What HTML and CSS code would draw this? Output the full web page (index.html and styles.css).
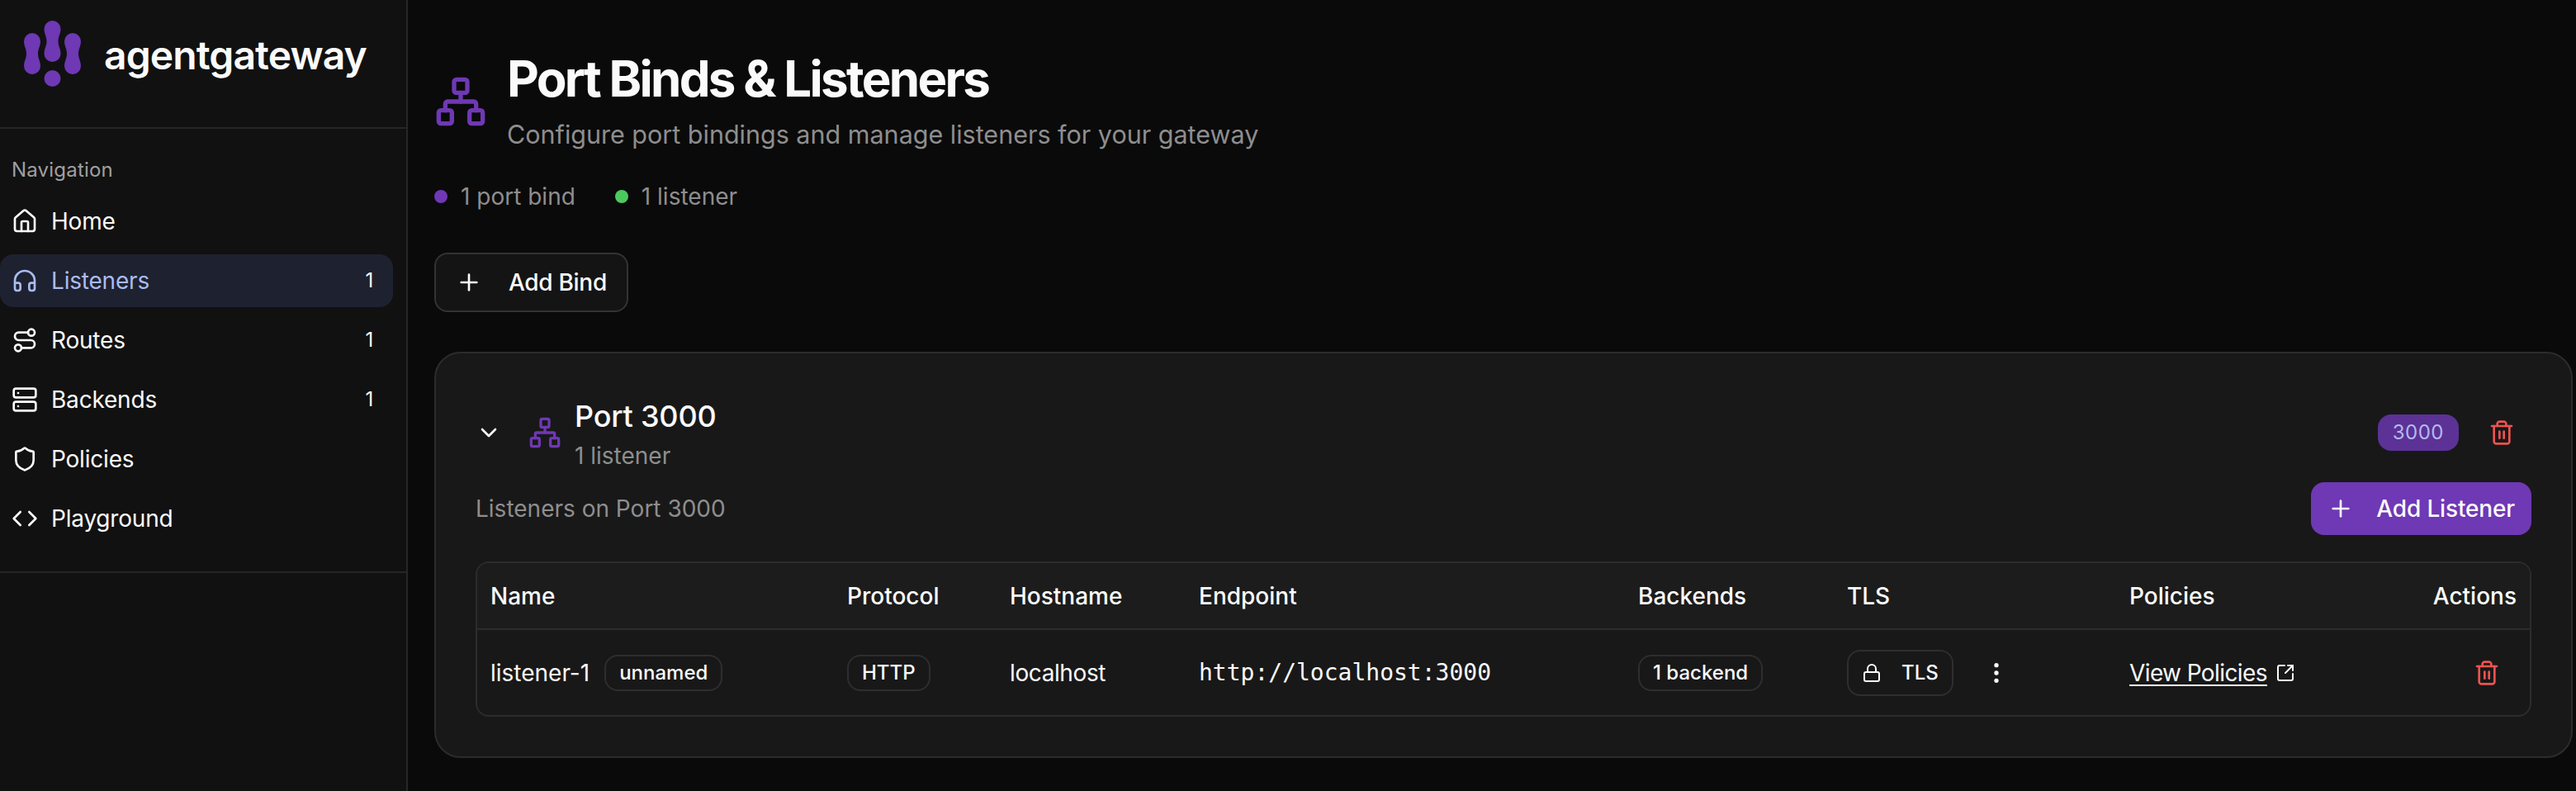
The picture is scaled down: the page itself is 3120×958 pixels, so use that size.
FILE: index.html
```html
<!DOCTYPE html>
<html lang="en">
<head>
  <meta charset="UTF-8">
  <title>agentgateway - Port Binds &amp; Listeners</title>
  <link rel="stylesheet" href="styles.css">
</head>
<body>
  <div class="app">
    <!-- Sidebar -->
    <aside class="sidebar">
      <div class="brand">
        <svg class="brand-logo" viewBox="0 0 80 80" fill="#6f38b4">
          <path d="M5 25a10 10 0 0 1 20 0c0 6-3 9-3 15s3 9 3 15a10 10 0 0 1-20 0c0-6 3-9 3-15s-3-9-3-15z"/>
          <path d="M29.500 10a10 10 0 0 1 20 0c0 6-3 9-3 15s3 9 3 15a10 10 0 0 1-20 0c0-6 3-9 3-15s-3-9-3-15z"/>
          <path d="M54 25a10 10 0 0 1 20 0c0 6-3 9-3 15s3 9 3 15a10 10 0 0 1-20 0c0-6 3-9 3-15s-3-9-3-15z"/>
          <circle cx="39.500" cy="70" r="10"/>
        </svg>
        <span class="brand-name">agentgateway</span>
      </div>
      <nav class="nav">
        <div class="nav-label">Navigation</div>
        <a class="nav-item">
          <svg class="icon" viewBox="0 0 24 24"><path d="M15 21v-8a1 1 0 0 0-1-1h-4a1 1 0 0 0-1 1v8"/><path d="M3 10a2 2 0 0 1 .709-1.528l7-5.999a2 2 0 0 1 2.582 0l7 5.999A2 2 0 0 1 21 10v9a2 2 0 0 1-2 2H5a2 2 0 0 1-2-2z"/></svg>
          <span>Home</span>
        </a>
        <a class="nav-item active">
          <svg class="icon" viewBox="0 0 24 24"><path d="M3 14h3a2 2 0 0 1 2 2v3a2 2 0 0 1-2 2H5a2 2 0 0 1-2-2v-7a9 9 0 0 1 18 0v7a2 2 0 0 1-2 2h-1a2 2 0 0 1-2-2v-3a2 2 0 0 1 2-2h3"/></svg>
          <span>Listeners</span>
          <span class="nav-count">1</span>
        </a>
        <a class="nav-item">
          <svg class="icon" viewBox="0 0 24 24"><circle cx="6" cy="19" r="3"/><path d="M9 19h8.500a3.500 3.500 0 0 0 0-7h-11a3.500 3.500 0 0 1 0-7H15"/><circle cx="18" cy="5" r="3"/></svg>
          <span>Routes</span>
          <span class="nav-count">1</span>
        </a>
        <a class="nav-item">
          <svg class="icon" viewBox="0 0 24 24"><rect width="20" height="8" x="2" y="2" rx="2" ry="2"/><rect width="20" height="8" x="2" y="14" rx="2" ry="2"/><line x1="6" x2="6.010" y1="6" y2="6"/><line x1="6" x2="6.010" y1="18" y2="18"/></svg>
          <span>Backends</span>
          <span class="nav-count">1</span>
        </a>
        <a class="nav-item">
          <svg class="icon" viewBox="0 0 24 24"><path d="M20 13c0 5-3.500 7.500-7.660 8.950a1 1 0 0 1-.67-.01C7.500 20.500 4 18 4 13V6a1 1 0 0 1 1-1c2 0 4.500-1.200 6.240-2.720a1.170 1.170 0 0 1 1.520 0C14.510 3.810 17 5 19 5a1 1 0 0 1 1 1z"/></svg>
          <span>Policies</span>
        </a>
        <a class="nav-item">
          <svg class="icon" viewBox="0 0 24 24"><polyline points="16 18 22 12 16 6"/><polyline points="8 6 2 12 8 18"/></svg>
          <span>Playground</span>
        </a>
      </nav>
    </aside>

    <!-- Main content -->
    <main class="main">
      <header class="page-head">
        <svg class="icon icon-page" viewBox="0 0 24 24"><rect x="16" y="16" width="6" height="6" rx="1"/><rect x="2" y="16" width="6" height="6" rx="1"/><rect x="9" y="2" width="6" height="6" rx="1"/><path d="M5 16v-3a1 1 0 0 1 1-1h12a1 1 0 0 1 1 1v3"/><path d="M12 12V8"/></svg>
        <div>
          <h1>Port Binds &amp; Listeners</h1>
          <p class="page-sub">Configure port bindings and manage listeners for your gateway</p>
        </div>
      </header>

      <div class="stats">
        <div class="stat"><span class="dot dot-purple"></span>1 port bind</div>
        <div class="stat"><span class="dot dot-green"></span>1 listener</div>
      </div>

      <button class="btn btn-outline">
        <svg class="icon icon-plus" viewBox="0 0 24 24"><path d="M5 12h14"/><path d="M12 5v14"/></svg>
        Add Bind
      </button>

      <section class="card">
        <div class="card-head">
          <svg class="icon chevron" viewBox="0 0 24 24"><path d="m6 9 6 6 6-6"/></svg>
          <svg class="icon icon-port" viewBox="0 0 24 24"><rect x="16" y="16" width="6" height="6" rx="1"/><rect x="2" y="16" width="6" height="6" rx="1"/><rect x="9" y="2" width="6" height="6" rx="1"/><path d="M5 16v-3a1 1 0 0 1 1-1h12a1 1 0 0 1 1 1v3"/><path d="M12 12V8"/></svg>
          <div class="card-title">
            <h2>Port 3000</h2>
            <div class="muted">1 listener</div>
          </div>
          <div class="card-actions">
            <span class="port-badge">3000</span>
            <button class="icon-btn">
              <svg class="icon icon-danger" viewBox="0 0 24 24"><path d="M3 6h18"/><path d="M19 6v14c0 1-1 2-2 2H7c-1 0-2-1-2-2V6"/><path d="M8 6V4c0-1 1-2 2-2h4c1 0 2 1 2 2v2"/><line x1="10" x2="10" y1="11" y2="17"/><line x1="14" x2="14" y1="11" y2="17"/></svg>
            </button>
          </div>
        </div>

        <div class="listeners-head">
          <div class="muted">Listeners on Port 3000</div>
          <button class="btn btn-primary">
            <svg class="icon icon-plus" viewBox="0 0 24 24"><path d="M5 12h14"/><path d="M12 5v14"/></svg>
            Add Listener
          </button>
        </div>

        <div class="table-wrap">
          <table>
            <colgroup>
              <col class="col-name"><col class="col-protocol"><col class="col-host"><col class="col-endpoint"><col class="col-backends"><col class="col-tls"><col class="col-policies"><col>
            </colgroup>
            <thead>
              <tr>
                <th>Name</th>
                <th>Protocol</th>
                <th>Hostname</th>
                <th>Endpoint</th>
                <th>Backends</th>
                <th>TLS</th>
                <th>Policies</th>
                <th class="right">Actions</th>
              </tr>
            </thead>
            <tbody>
              <tr>
                <td><div class="cell-flex">listener-1 <span class="badge">unnamed</span></div></td>
                <td><span class="badge">HTTP</span></td>
                <td class="tight">localhost</td>
                <td class="mono">http://localhost:3000</td>
                <td><span class="badge">1 backend</span></td>
                <td>
                  <div class="tls-cell">
                    <button class="tls-btn">
                      <svg class="icon icon-small" viewBox="0 0 24 24"><rect width="18" height="11" x="3" y="11" rx="2" ry="2"/><path d="M7 11V7a5 5 0 0 1 10 0v4"/></svg>
                      TLS
                    </button>
                    <svg class="icon more" viewBox="0 0 24 24"><circle cx="12" cy="12" r="1"/><circle cx="12" cy="5" r="1"/><circle cx="12" cy="19" r="1"/></svg>
                  </div>
                </td>
                <td>
                  <div class="cell-flex policies">
                    <a class="link">View Policies</a>
                    <svg class="icon icon-small" viewBox="0 0 24 24"><path d="M21 13v6a2 2 0 0 1-2 2H5a2 2 0 0 1-2-2V5a2 2 0 0 1 2-2h6"/><path d="m21 3-9 9"/><path d="M15 3h6v6"/></svg>
                  </div>
                </td>
                <td class="right">
                  <button class="icon-btn">
                    <svg class="icon icon-danger" viewBox="0 0 24 24"><path d="M3 6h18"/><path d="M19 6v14c0 1-1 2-2 2H7c-1 0-2-1-2-2V6"/><path d="M8 6V4c0-1 1-2 2-2h4c1 0 2 1 2 2v2"/><line x1="10" x2="10" y1="11" y2="17"/><line x1="14" x2="14" y1="11" y2="17"/></svg>
                  </button>
                </td>
              </tr>
            </tbody>
          </table>
        </div>
      </section>
    </main>
  </div>
</body>
</html>
```
FILE: styles.css
```css
/* General */
* { box-sizing: border-box; }
html, body { height: 100%; }
body {
  margin: 0;
  overflow: hidden;
  font-family: 'Inter', sans-serif;
  font-size: 28px;
  line-height: 40px;
  background-color: #0a0a0a;
  color: #fafafa;
}
.app {
  display: flex;
  height: 100%;
}
button {
  font-family: inherit;
  color: inherit;
  padding: 0;
  border: none;
  background: none;
}
.icon {
  flex: none;
  width: 32px;
  height: 32px;
  fill: none;
  stroke: currentColor;
  stroke-width: 2;
  stroke-linecap: round;
  stroke-linejoin: round;
}
.muted { color: #8e8e8e; }

/* Sidebar */
.sidebar {
  flex: none;
  width: 494px;
  background-color: #111;
  border-right: 2px solid #262626;
}
.brand {
  display: flex;
  align-items: center;
  gap: 22px;
  height: 156px;
  padding: 0 24px 24px;
  border-bottom: 2px solid #262626;
}
.brand-logo {
  width: 80px;
  height: 80px;
}
.brand-name {
  margin-top: 4px;
  font-size: 48px;
  font-weight: 600;
  line-height: 56px;
  letter-spacing: -0.900px;
}
.nav {
  height: 538px;
  padding: 32px 16px 32px 0;
  border-bottom: 2px solid #262626;
}
.nav-label {
  height: 48px;
  padding: 2px 0 0 14px;
  font-size: 24px;
  line-height: 32px;
  letter-spacing: 0.200px;
  color: #a0a0a0;
}
.nav-item {
  display: flex;
  align-items: center;
  gap: 16px;
  height: 64px;
  margin-bottom: 8px;
  padding: 0 24px 0 14px;
  border-radius: 16px;
  letter-spacing: -0.200px;
}
.nav-item.active {
  background-color: #1e2130;
  color: #a9bcf0;
}
.nav-count {
  margin-left: auto;
  font-size: 24px;
  color: #fafafa;
}

/* Page header */
.main {
  flex: 1;
  min-width: 0;
  padding: 59px 4px 0 32px;
}
.page-head {
  display: flex;
  align-items: center;
  gap: 24px;
}
.icon-page {
  width: 64px;
  height: 64px;
  color: #6f38b4;
}
h1 {
  margin: 0 0 8px;
  font-size: 60px;
  font-weight: 700;
  line-height: 72px;
  letter-spacing: -2.700px;
}
.page-sub {
  margin: 0;
  font-size: 30.500px;
  line-height: 48px;
  color: #8e8e8e;
}
.stats {
  display: flex;
  gap: 48px;
  margin: 31px 0 48px;
  color: #8e8e8e;
}
.stat {
  display: flex;
  align-items: center;
  gap: 16px;
}
.dot {
  width: 16px;
  height: 16px;
  border-radius: 50%;
}
.dot-purple { background-color: #6f38b4; }
.dot-green { background-color: #4cc95e; }

/* Buttons */
.btn {
  display: flex;
  align-items: center;
  border-radius: 16px;
  font-size: 28px;
  font-weight: 500;
}
.btn-outline {
  gap: 32px;
  height: 72px;
  padding: 0 24px;
  background-color: #141414;
  border: 2px solid #333;
  letter-spacing: -0.300px;
}
.btn-primary {
  gap: 27px;
  height: 64px;
  padding: 0 20px;
  background-color: #6f38b4;
  letter-spacing: -0.150px;
}
.icon-btn {
  display: flex;
  align-items: center;
  justify-content: center;
  width: 72px;
  height: 72px;
}
.icon-danger { color: #ef5350; }

/* Port card */
.card {
  margin-top: 48px;
  padding: 48px;
  background-color: #181818;
  border: 2px solid #2c2c2c;
  border-radius: 32px;
}
.card-head {
  display: flex;
  align-items: center;
}
.chevron { margin-right: 32px; }
.icon-port {
  width: 40px;
  height: 40px;
  margin-right: 16px;
  color: #6f38b4;
}
h2 {
  margin: 0;
  font-size: 36px;
  font-weight: 500;
  line-height: 56px;
  letter-spacing: -0.200px;
}
.card-actions {
  display: flex;
  align-items: center;
  gap: 16px;
  margin-left: auto;
}
.port-badge {
  padding: 0 18px;
  height: 44px;
  line-height: 44px;
  font-size: 24px;
  letter-spacing: 0.500px;
  border-radius: 16px;
  background-color: #5c3296;
  color: #b4b8f0;
}
.listeners-head {
  display: flex;
  align-items: center;
  justify-content: space-between;
  margin: 12px 0 32px;
}

/* Listener table */
.table-wrap {
  border: 2px solid #2c2c2c;
  border-radius: 16px;
  overflow: hidden;
}
table {
  width: 100%;
  table-layout: fixed;
  border-collapse: collapse;
}
.col-name { width: 432px; }
.col-protocol { width: 197px; }
.col-host { width: 229px; }
.col-endpoint { width: 532px; }
.col-backends { width: 253px; }
.col-tls { width: 342px; }
.col-policies { width: 340px; }
th {
  height: 80px;
  padding: 0 16px;
  font-weight: 500;
  text-align: left;
  background-color: #1c1c1c;
  border-bottom: 2px solid #2c2c2c;
}
td {
  height: 104px;
  padding: 0 16px;
}
.right { text-align: right; }
td.right .icon-btn { margin-left: auto; }
.cell-flex {
  display: flex;
  align-items: center;
  gap: 18px;
}
.badge {
  display: inline-block;
  height: 44px;
  padding: 0 16px;
  border: 2px solid #2e2e2e;
  border-radius: 16px;
  font-size: 24px;
  font-weight: 500;
  line-height: 40px;
  white-space: nowrap;
}
.tight { letter-spacing: -0.400px; }
.mono {
  font-family: 'DejaVu Sans Mono', monospace;
  font-size: 28px;
}
.tls-cell {
  display: flex;
  align-items: center;
  gap: 36px;
}
.tls-btn {
  display: flex;
  align-items: center;
  gap: 24px;
  height: 56px;
  padding: 0 16px;
  border: 2px solid #2e2e2e;
  border-radius: 16px;
  font-size: 24px;
  font-weight: 500;
}
.icon-small {
  width: 24px;
  height: 24px;
}
.policies { gap: 10px; }
.link {
  letter-spacing: -0.600px;
  text-decoration: underline;
  text-underline-offset: 4px;
}
```
